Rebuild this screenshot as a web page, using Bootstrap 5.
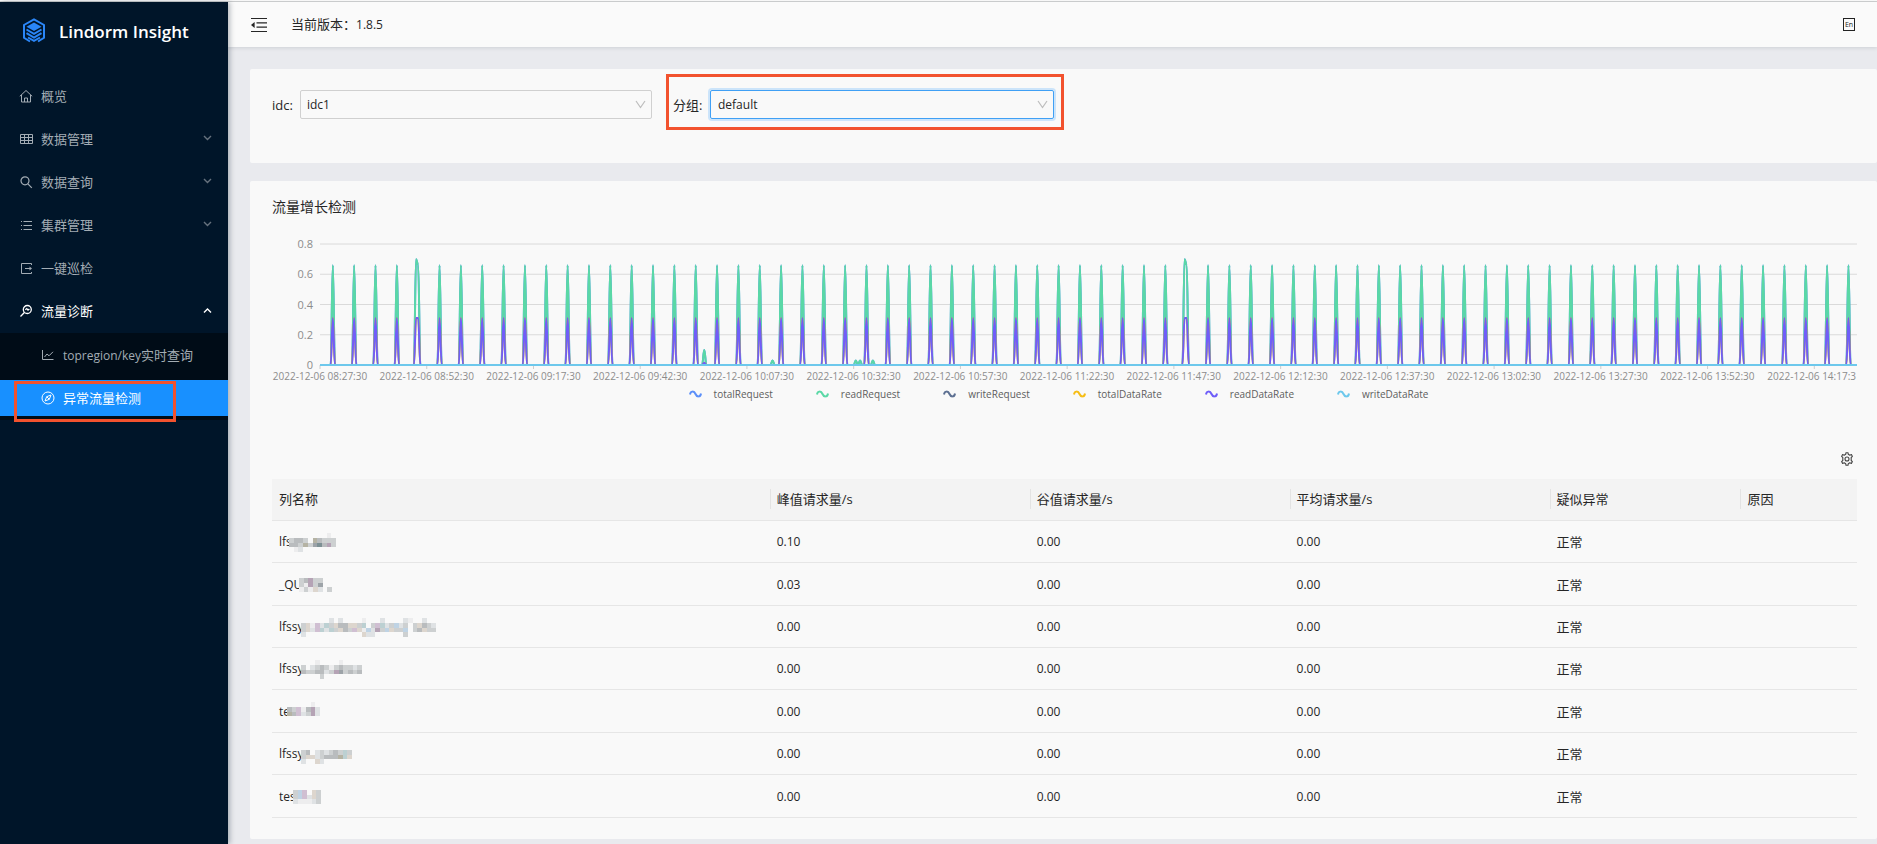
<!DOCTYPE html>
<html lang="zh-CN">
<head>
<meta charset="utf-8">
<meta name="viewport" content="width=device-width, initial-scale=1">
<title>Lindorm Insight</title>
<link href="https://cdn.jsdelivr.net/npm/bootstrap@5.3.0/dist/css/bootstrap.min.css" rel="stylesheet">
<style>
  :root { --mark: #f2522e; --ui: "Open Sans", "Noto Sans CJK SC", sans-serif; }
  body { font-family: var(--ui); font-size: 13px; line-height: 20px; color: #262626; background: #e9eaee; }
  svg { display: block; flex: none; }
  .topline { height: 2px; background: #fafafa; border-bottom: 1px solid #cfd1d1; }
  .shell { min-height: calc(100vh - 2px); }
  .latin { font-size: 12px; }

  .side { width: 228px; flex: none; background: #001529; box-shadow: 2px 0 5px rgba(0,21,41,.28); z-index: 2; }
  .brand { height: 73px; padding: 16px 0 0 22px; gap: 13px; color: #fff; font-size: 17px; font-weight: 600; line-height: 28px; }
  .side a { color: #a3acb4; text-decoration: none; }
  .menu-item { height: 43px; padding: 0 16px 2px 19px; gap: 8px; }
  .menu-item svg, .sub-item svg { width: 14px; height: 14px; }
  .menu-item .arrow { width: 9px; height: 9px; color: #66727e; }
  .side a.opened, .side a.opened .arrow, .side a.current { color: #fff; }
  .submenu { background: #000c17; padding: 4px 0; }
  .sub-item { height: 36px; padding-left: 41px; gap: 8px; position: relative; }
  .sub-item + .sub-item { margin-top: 7px; }
  .sub-item.current { background: #1890ff; }
  .spot { position: absolute; left: 14px; top: 1px; width: 162px; height: 41px; border: 3px solid var(--mark); }

  .topbar { height: 45px; padding: 0 22px 0 23px; background: #fafafa; box-shadow: 0 1px 4px rgba(0,21,41,.12); }
  .iconbtn { border: 0; background: none; padding: 0; color: #262626; }
  .content { padding: 22px 0 5px 22px; gap: 18px; }
  .panel { background: #f9f9f9; border-radius: 2px; }

  .filters { padding: 5px 0 33px 22px; gap: 14px; }
  .filters label { white-space: nowrap; flex: none; }
  .f-idc { width: 380px; max-width: 24%; padding-top: 16px; }
  .f-idc label { width: 28px; }
  .f-group { width: 398px; max-width: 25%; border: 3px solid var(--mark); padding: 13px 7px 8px 4px; }
  .f-group label { width: 37px; }
  .filters .form-select {
    height: 29px; padding: 0 24px 0 6px; border: 1px solid #d0d0d0; border-radius: 2px; color: #262626;
    font-size: 12px; line-height: 27px; background-color: transparent; background-position: right 5px center; background-size: 11px 9px;
    background-image: url("data:image/svg+xml,%3Csvg xmlns='http://www.w3.org/2000/svg' viewBox='0 0 11 9'%3E%3Cpath d='M1 1l4.500 6.500L10 1' fill='none' stroke='%23bdbdbd' stroke-width='1.200'/%3E%3C/svg%3E");
  }
  .filters .f-group .form-select { border-color: #40a0f5; padding-left: 7px; box-shadow: 0 0 0 2px rgba(24,144,255,.2); }

  .report { padding: 15px 20px 21px 22px; }
  .report h2 { font-size: 14px; line-height: 22px; font-weight: 400; margin: 0 0 26px; }
  .yaxis { width: 48px; padding-right: 7px; height: 135px; margin: -7px 0; font-size: 11px; line-height: 14px; color: #8c8c8c; text-align: right; }
  .plot { height: 121px; overflow: visible; width: 100%; }
  .xaxis { padding-left: 48px; overflow: hidden; margin-top: 4px; font-size: 10px; line-height: 14px; color: #8c8c8c; }
  .xaxis span { flex: 0 0 6.944%; text-align: center; white-space: nowrap; }
  .xaxis span:first-child { margin-left: -3.472%; }
  .xaxis span:last-child { flex-basis: 6.2%; text-align: right; }
  .legend-row { gap: 43px; padding-right: 12px; margin-top: 4px; font-size: 10px; line-height: 14px; color: #5e5e5e; }
  .legend-row span { gap: 12px; }
  .tools { padding: 51px 3px 13px 0; }

  .report table { font-size: 13px; margin: 0; table-layout: fixed; width: 100%; }
  .report th, .report td { padding: 0 7px; font-weight: 400; vertical-align: middle; border-bottom: 1px solid #e6e6e6; }
  .report thead tr { height: 41px; background: #f3f3f3; }
  .report th > span { display: block; margin-left: -7px; padding-left: 6px; border-left: 1px solid #e3e3e3; }
  .report th:first-child > span { border-color: transparent; }
  .report tbody tr { height: 42px; }
  .report tbody tr:nth-child(3n+2), .report tbody tr:last-child { height: 43px; }
  .report td { font-size: 12px; padding-top: 2px; }
  .report td:nth-child(5) { font-size: 13px; }
  .mosaic { margin-left: -3px; }
</style>
</head>
<body>
<div class="topline"></div>
<div class="shell d-flex">
  <aside class="side">
    <div class="brand d-flex">
      <svg width="24" height="26" viewBox="0 0 24 26" fill="none" stroke="#2a86f7" stroke-width="2">
        <path d="M8 23.500L2 19.800V7L12 1.400 22 7v12.800L16 23.500"/>
        <path d="M12 4.500l7.500 4.200L12 13 4.500 8.700z" fill="#2a86f7" stroke="none"/>
        <path d="M4.500 11.500l7.500 4.300 7.500-4.300M4.500 15.200l7.500 4.300 7.500-4.300M6 19.500l6 3.400 6-3.400" stroke-width="2"/>
      </svg>
      <span>Lindorm Insight</span>
    </div>
    <nav>
      <a href="#" class="menu-item d-flex align-items-center">
        <svg viewBox="0 0 14 14" fill="none" stroke="currentColor"><path d="M.8 7.300L7 1.500l6.200 5.800M2.500 6v7h9V6M5.500 13V9h3v4"/></svg><span>概览</span></a>
      <a href="#" class="menu-item d-flex align-items-center">
        <svg viewBox="0 0 14 14" fill="none" stroke="currentColor"><path d="M1.500 2.500h12v9h-12zM1.500 5.500h12M1.500 8.500h12M5.500 2.500v9M9.500 2.500v9"/></svg><span>数据管理</span>
        <svg class="arrow ms-auto" viewBox="0 0 9 9" fill="none" stroke="currentColor" stroke-width="1.400"><path d="M1 2l3.500 3.500L8 2"/></svg></a>
      <a href="#" class="menu-item d-flex align-items-center">
        <svg viewBox="0 0 14 14" fill="none" stroke="currentColor" stroke-width="1.200"><circle cx="6" cy="5.800" r="4"/><path d="M8.900 8.800l3.900 4"/></svg><span>数据查询</span>
        <svg class="arrow ms-auto" viewBox="0 0 9 9" fill="none" stroke="currentColor" stroke-width="1.400"><path d="M1 2l3.500 3.500L8 2"/></svg></a>
      <a href="#" class="menu-item d-flex align-items-center">
        <svg viewBox="0 0 14 14" fill="none" stroke="currentColor"><path d="M4.500 3.500H13M4.500 7.500H13M4.500 11.500H13M2 3.500h1M2 7.500h1M2 11.500h1"/></svg><span>集群管理</span>
        <svg class="arrow ms-auto" viewBox="0 0 9 9" fill="none" stroke="currentColor" stroke-width="1.400"><path d="M1 2l3.500 3.500L8 2"/></svg></a>
      <a href="#" class="menu-item d-flex align-items-center">
        <svg viewBox="0 0 14 14" fill="none" stroke="currentColor"><path d="M12.500 4V2.500H2.500v10h10V11M6 7.500h6"/><path d="M10.500 5.500l2.500 2-2.500 2z" fill="currentColor" stroke="none"/></svg><span>一键巡检</span></a>
      <a href="#" class="menu-item opened d-flex align-items-center">
        <svg viewBox="0 0 14 14" fill="none" stroke="currentColor" stroke-width="1.300"><circle cx="8.300" cy="5.500" r="4"/><path d="M5.400 8.500L1.500 12.500M6.300 5.800l1.500-1.200 1.200 1.500 1.400-1.200"/></svg><span>流量诊断</span>
        <svg class="arrow ms-auto" viewBox="0 0 9 9" fill="none" stroke="currentColor" stroke-width="1.400"><path d="M1 6.500L4.500 3 8 6.500"/></svg></a>
      <div class="submenu">
        <a href="#" class="sub-item d-flex align-items-center">
          <svg viewBox="0 0 14 14" fill="none" stroke="currentColor"><path d="M1.500 2v9.500h11M3.500 9l2.500-3 2 1.800L12 3.800"/></svg>
          <span><span class="latin">topregion/key</span>实时查询</span></a>
        <a href="#" class="sub-item current d-flex align-items-center">
          <svg viewBox="0 0 14 14" fill="none" stroke="currentColor"><circle cx="7" cy="7" r="6"/><path d="M10 4L8.300 8.300 4 10l1.700-4.300zM5.700 5.700l2.600 2.600"/></svg>
          <span>异常流量检测</span><i class="spot"></i></a>
      </div>
    </nav>
  </aside>

  <div class="flex-grow-1 d-flex flex-column" style="min-width:0">
    <header class="topbar d-flex align-items-center">
      <button class="iconbtn" type="button" aria-label="收起菜单">
        <svg width="16" height="14" viewBox="0 0 16 14"><path d="M0 .5h16M5.500 4.800H16M5.500 9.200H16M0 13.500h16" stroke="currentColor" stroke-width="1.200"/><path d="M0 7l3.600-3v6z" fill="currentColor"/></svg>
      </button>
      <span class="ms-4">当前版本：<span class="latin">1.8.5</span></span>
      <button class="iconbtn ms-auto" type="button" aria-label="English">
        <svg width="12" height="13" viewBox="0 0 12 13"><rect x=".5" y=".5" width="11" height="12" fill="none" stroke="#222"/><text x="6" y="9" text-anchor="middle" font-size="7" font-family="Open Sans, sans-serif" fill="#222">En</text></svg>
      </button>
    </header>

    <main class="content d-flex flex-column">
      <form class="panel filters d-flex align-items-start">
        <div class="f-idc d-flex align-items-center">
          <label for="idc">idc:</label>
          <select id="idc" class="form-select"><option>idc1</option></select>
        </div>
        <div class="f-group d-flex align-items-center">
          <label for="grp">分组:</label>
          <select id="grp" class="form-select"><option>default</option></select>
        </div>
      </form>

      <section class="panel report">
        <h2>流量增长检测</h2>
        <div class="d-flex">
          <div class="yaxis d-flex flex-column justify-content-between flex-shrink-0"><span>0.8</span><span>0.6</span><span>0.4</span><span>0.2</span><span>0</span></div>
          <div class="flex-grow-1"><svg class="plot" id="plot" viewBox="0 0 720 121" preserveAspectRatio="none" fill="none" stroke-linejoin="round"></svg></div>
        </div>
        <div class="xaxis"><div class="d-flex">
          <span>2022-12-06 08:27:30</span><span>2022-12-06 08:52:30</span><span>2022-12-06 09:17:30</span><span>2022-12-06 09:42:30</span><span>2022-12-06 10:07:30</span><span>2022-12-06 10:32:30</span><span>2022-12-06 10:57:30</span><span>2022-12-06 11:22:30</span><span>2022-12-06 11:47:30</span><span>2022-12-06 12:12:30</span><span>2022-12-06 12:37:30</span><span>2022-12-06 13:02:30</span><span>2022-12-06 13:27:30</span><span>2022-12-06 13:52:30</span><span>2022-12-06 14:17:3</span>
        </div></div>
        <div class="legend-row d-flex justify-content-center">
          <span class="d-flex align-items-center"><svg width="13" height="8" viewBox="0 0 13 8" fill="none" stroke="#5b8ff9" stroke-width="2"><path d="M1 4.500C1.500 1 5 .5 6.500 4S11.500 7 12 3.500"/></svg>totalRequest</span>
          <span class="d-flex align-items-center"><svg width="13" height="8" viewBox="0 0 13 8" fill="none" stroke="#5ad8a6" stroke-width="2"><path d="M1 4.500C1.500 1 5 .5 6.500 4S11.500 7 12 3.500"/></svg>readRequest</span>
          <span class="d-flex align-items-center"><svg width="13" height="8" viewBox="0 0 13 8" fill="none" stroke="#5d7092" stroke-width="2"><path d="M1 4.500C1.500 1 5 .5 6.500 4S11.500 7 12 3.500"/></svg>writeRequest</span>
          <span class="d-flex align-items-center"><svg width="13" height="8" viewBox="0 0 13 8" fill="none" stroke="#f6bd16" stroke-width="2"><path d="M1 4.500C1.500 1 5 .5 6.500 4S11.500 7 12 3.500"/></svg>totalDataRate</span>
          <span class="d-flex align-items-center"><svg width="13" height="8" viewBox="0 0 13 8" fill="none" stroke="#6f5ef9" stroke-width="2"><path d="M1 4.500C1.500 1 5 .5 6.500 4S11.500 7 12 3.500"/></svg>readDataRate</span>
          <span class="d-flex align-items-center"><svg width="13" height="8" viewBox="0 0 13 8" fill="none" stroke="#6dc8ec" stroke-width="2"><path d="M1 4.500C1.500 1 5 .5 6.500 4S11.500 7 12 3.500"/></svg>writeDataRate</span>
        </div>
        <div class="tools d-flex justify-content-end">
          <button class="iconbtn" type="button" aria-label="列设置">
            <svg width="14" height="14" viewBox="0 0 14 14" fill="none" stroke="#444" stroke-width="1.100" stroke-linejoin="round"><path d="M5.700 2.300L6 .7h2l.3 1.600 1.500.9 1.600-.6 1 1.800-1.200 1.100v3l1.200 1.100-1 1.800-1.600-.6-1.500.9L8 13.300H6l-.3-1.600-1.500-.9-1.600.6-1-1.800 1.200-1.100v-3L1.600 4.400l1-1.800 1.600.6z"/><circle cx="7" cy="7" r="2"/></svg>
          </button>
        </div>
        <table>
          <colgroup><col style="width:31.4%"><col style="width:16.4%"><col style="width:16.4%"><col style="width:16.4%"><col style="width:12.05%"><col></colgroup>
          <thead><tr><th><span>列名称</span></th><th><span>峰值请求量/s</span></th><th><span>谷值请求量/s</span></th><th><span>平均请求量/s</span></th><th><span>疑似异常</span></th><th><span>原因</span></th></tr></thead>
          <tbody>
            <tr><td><div class="d-flex align-items-center">lfs<svg class="mosaic" data-m="........1.,3443.64333,44363574p3,.12......."></svg></div></td><td>0.10</td><td>0.00</td><td>0.00</td><td>正常</td><td></td></tr>
            <tr><td><div class="d-flex align-items-center">_QU<svg class="mosaic" data-m="34p33..,31p35..,131t2.3"></svg></div></td><td>0.03</td><td>0.00</td><td>0.00</td><td>正常</td><td></td></tr>
            <tr><td><div class="d-flex align-items-center">lfssy<svg class="mosaic" data-m="......2.2....1...2....21..2..,3t1q2c3t44tt3c.3qc23b23.3t432,3t2qc2c3t43qt1b2p3bt33b.34t33,2............t22......3....."></svg></div></td><td>0.00</td><td>0.00</td><td>0.00</td><td>正常</td><td></td></tr>
            <tr><td><div class="d-flex align-items-center">lfssy<svg class="mosaic" data-m="...1....1....,3.23431343323,4334423p53434,....3........"></svg></div></td><td>0.00</td><td>0.00</td><td>0.00</td><td>正常</td><td></td></tr>
            <tr><td><div class="d-flex align-items-center">te<svg class="mosaic" data-m=".....1.,43q14p2,64q23p2,......."></svg></div></td><td>0.00</td><td>0.00</td><td>0.00</td><td>正常</td><td></td></tr>
            <tr><td><div class="d-flex align-items-center">lfssy<svg class="mosaic" data-m="...........,34.232343c3,3tt234446ct,2..t2......"></svg></div></td><td>0.00</td><td>0.00</td><td>0.00</td><td>正常</td><td></td></tr>
            <tr><td><div class="d-flex align-items-center">tes<svg class="mosaic" data-m="3bq.t3,3bq2t3,211123"></svg></div></td><td>0.00</td><td>0.00</td><td>0.00</td><td>正常</td><td></td></tr>
          </tbody>
        </table>
      </section>
    </main>
  </div>
</div>
<script src="https://cdn.jsdelivr.net/npm/bootstrap@5.3.0/dist/js/bootstrap.bundle.min.js"></script>
<script>
  // Traffic chart: one sample every 30 seconds, 720 steps, values 0 to 0.8.
  const NS = 'http://www.w3.org/2000/svg', H = 121, MAX = 0.8;
  const plot = document.getElementById('plot');
  function line(d, stroke, width) {
    const p = document.createElementNS(NS, 'path');
    p.setAttribute('d', d); p.setAttribute('stroke', stroke); p.setAttribute('stroke-width', width);
    p.setAttribute('vector-effect', 'non-scaling-stroke');
    plot.appendChild(p);
  }
  for (const v of [0.8, 0.6, 0.4, 0.2]) line(`M0 ${H - v / MAX * H}H720`, '#dadada', 1);
  for (let x = 0; x < 720; x += 50) line(`M${x} ${H}v4`, '#cccccc', 1);
  function series(peak, twin, bumps) {
    const v = new Array(721).fill(0);
    for (let i = 6; i < 720; i += 10) v[i] = peak;
    v[45] = v[405] = twin;
    for (const i in bumps) v[i] = bumps[i];
    let d = `M0 ${H}`;
    for (let i = 1; i <= 720; i++) {
      const a = H - v[i - 1] / MAX * H, b = H - v[i] / MAX * H;
      d += a === b ? `H${i}` : `C${i - .6} ${a} ${i - .4} ${b} ${i} ${b}`;
    }
    return d;
  }
  const req = series(0.66, 0.7, {180: 0.1, 212: 0.03, 251: 0.03, 253: 0.03, 259: 0.03});
  const rate = series(0.31, 0.31, {180: 0.015});
  line(req, '#5b8ff9', 2); line(req, '#5ad8a6', 2);
  line(`M0 ${H}H720`, '#5d7092', 2);
  line(rate, '#f6bd16', 2); line(rate, '#6f5ef9', 2);
  line(`M0 ${H}H720`, '#6dc8ec', 2);

  // Masked names: each code character is one tile.
  const tone = {1:'#ededee',2:'#dfe2e4',3:'#cdd0d1',4:'#b9bcbe',5:'#9da3a8',6:'#b5b3a4',7:'#7d9094',p:'#b5a3b5',q:'#d0bfd2',t:'#ddd6ce',c:'#bcd0d2',b:'#bfd3e4'};
  for (const s of document.querySelectorAll('.mosaic')) {
    const rows = s.dataset.m.split(','), n = Math.max(...rows.map(r => r.length));
    s.setAttribute('viewBox', `0 0 ${n} ${rows.length}`);
    s.setAttribute('width', Math.round(n * 14 / 3));
    s.setAttribute('height', Math.round(rows.length * 14 / 3));
    s.setAttribute('preserveAspectRatio', 'none');
    s.setAttribute('shape-rendering', 'crispEdges');
    rows.forEach((r, y) => [...r].forEach((ch, x) => {
      if (!tone[ch]) return;
      const q = document.createElementNS(NS, 'rect');
      q.setAttribute('x', x); q.setAttribute('y', y); q.setAttribute('width', 1); q.setAttribute('height', 1);
      q.setAttribute('fill', tone[ch]); s.appendChild(q);
    }));
  }
</script>
</body>
</html>
